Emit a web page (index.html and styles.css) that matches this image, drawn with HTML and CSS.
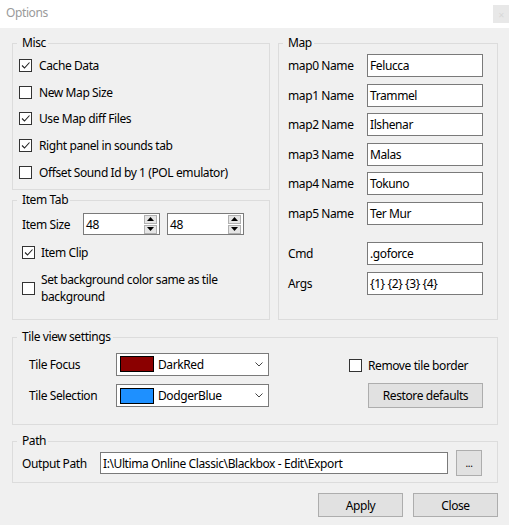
FILE: index.html
```html
<!DOCTYPE html>
<html>
<head>
<meta charset="utf-8">
<link rel="stylesheet" href="styles.css">
</head>
<body>
<div class="titlebar">
  <span class="title">Options</span>
  <span class="close">✕</span>
</div>
<div class="content">
  <div class="top">
    <div class="leftcol">
      <div class="grp misc">
        <div class="legend">Misc</div>
        <div class="checks">
          <div class="check"><span class="cb"><svg viewBox="0 0 11 11" width="11" height="11"><path d="M2 5.5 L4.5 8 L9.5 2.5" fill="none" stroke="#222" stroke-width="1.1"/></svg></span><span>Cache Data</span></div>
          <div class="check"><span class="cb"></span><span>New Map Size</span></div>
          <div class="check"><span class="cb"><svg viewBox="0 0 11 11" width="11" height="11"><path d="M2 5.5 L4.5 8 L9.5 2.5" fill="none" stroke="#222" stroke-width="1.1"/></svg></span><span>Use Map diff Files</span></div>
          <div class="check"><span class="cb"><svg viewBox="0 0 11 11" width="11" height="11"><path d="M2 5.5 L4.5 8 L9.5 2.5" fill="none" stroke="#222" stroke-width="1.1"/></svg></span><span>Right panel in sounds tab</span></div>
          <div class="check"><span class="cb"></span><span>Offset Sound Id by 1 (POL emulator)</span></div>
        </div>
      </div>
      <div class="grp itemtab">
        <div class="legend">Item Tab</div>
        <div class="sizerow">
          <span class="sizelabel">Item Size</span>
          <div class="spin"><span class="spinval">48</span><span class="spinbtns"><span class="sbtn"><svg viewBox="0 0 7 4" width="7" height="4"><path d="M0 4 L3.5 0 L7 4 Z" fill="#000"/></svg></span><span class="sbtn"><svg viewBox="0 0 7 4" width="7" height="4"><path d="M0 0 L3.5 4 L7 0 Z" fill="#000"/></svg></span></span></div>
          <div class="spin"><span class="spinval">48</span><span class="spinbtns"><span class="sbtn"><svg viewBox="0 0 7 4" width="7" height="4"><path d="M0 4 L3.5 0 L7 4 Z" fill="#000"/></svg></span><span class="sbtn"><svg viewBox="0 0 7 4" width="7" height="4"><path d="M0 0 L3.5 4 L7 0 Z" fill="#000"/></svg></span></span></div>
        </div>
        <div class="check clip"><span class="cb"><svg viewBox="0 0 11 11" width="11" height="11"><path d="M2 5.5 L4.5 8 L9.5 2.5" fill="none" stroke="#222" stroke-width="1.1"/></svg></span><span>Item Clip</span></div>
        <div class="check bgrow"><span class="cb"></span><span class="twoline">Set background color same as tile<br>background</span></div>
      </div>
    </div>
    <div class="grp map">
      <div class="legend">Map</div>
      <div class="maprows">
        <div class="frow"><span class="flabel">map0 Name</span><span class="tb">Felucca</span></div>
        <div class="frow"><span class="flabel">map1 Name</span><span class="tb">Trammel</span></div>
        <div class="frow"><span class="flabel">map2 Name</span><span class="tb">Ilshenar</span></div>
        <div class="frow"><span class="flabel">map3 Name</span><span class="tb">Malas</span></div>
        <div class="frow"><span class="flabel">map4 Name</span><span class="tb">Tokuno</span></div>
        <div class="frow"><span class="flabel">map5 Name</span><span class="tb">Ter Mur</span></div>
      </div>
      <div class="cmdrows">
        <div class="frow"><span class="flabel">Cmd</span><span class="tb">.goforce</span></div>
        <div class="frow"><span class="flabel">Args</span><span class="tb">{1} {2} {3} {4}</span></div>
      </div>
    </div>
  </div>

  <div class="grp tileview">
    <div class="legend">Tile view settings</div>
    <div class="tilebody">
      <div class="tilegrid">
        <span class="tlabel">Tile Focus</span>
        <div class="combo"><span class="swatch red"></span><span class="ctext">DarkRed</span><svg class="chev" viewBox="0 0 8 5" width="8" height="5"><path d="M0.5 0.5 L4 4 L7.5 0.5" fill="none" stroke="#444" stroke-width="1"/></svg></div>
        <span class="tlabel">Tile Selection</span>
        <div class="combo"><span class="swatch blue"></span><span class="ctext">DodgerBlue</span><svg class="chev" viewBox="0 0 8 5" width="8" height="5"><path d="M0.5 0.5 L4 4 L7.5 0.5" fill="none" stroke="#444" stroke-width="1"/></svg></div>
      </div>
      <div class="tileright">
        <div class="check rtb"><span class="cb"></span><span>Remove tile border</span></div>
        <button class="btn restore">Restore defaults</button>
      </div>
    </div>
  </div>

  <div class="grp path">
    <div class="legend">Path</div>
    <div class="pathrow">
      <span class="plabel">Output Path</span>
      <span class="tb ptb">I:\Ultima Online Classic\Blackbox - Edit\Export</span>
      <button class="btn dots">...</button>
    </div>
  </div>

  <div class="actions">
    <button class="btn act">Apply</button>
    <button class="btn act">Close</button>
  </div>
</div>
</body>
</html>
```

FILE: styles.css
```css
* { box-sizing: border-box; }

html, body {
  margin: 0;
  padding: 0;
}

body {
  width: 509px;
  height: 525px;
  overflow: hidden;
  background: #f0f0f0;
  font-family: "Noto Sans", "Open Sans", sans-serif;
  font-size: 12px;
  letter-spacing: -0.4px;
  color: #000;
}

.titlebar {
  height: 28px;
  background: #fff;
  display: flex;
  justify-content: space-between;
  align-items: flex-start;
}

.title {
  color: #9a9a9a;
  padding: 5px 0 0 6px;
  line-height: 16px;
}

.close {
  width: 16px;
  height: 18px;
  margin-top: 5px;
  background: #e8e8e8;
  color: #d8d8d8;
  font-size: 8px;
  display: flex;
  align-items: center;
  justify-content: center;
}

.content {
  padding: 15px 11px 0 12px;
}

.top {
  display: grid;
  grid-template-columns: 258px 220px;
  column-gap: 8px;
}

.leftcol {
  display: flex;
  flex-direction: column;
  gap: 10px;
}

.grp {
  border: 1px solid #dcdcdc;
}

.legend {
  display: block;
  width: max-content;
  margin: -9px 0 0 4px;
  padding: 0 2px 0 5px;
  background: #f0f0f0;
  line-height: 16px;
  height: 16px;
}

.itemtab .legend,
.map .legend,
.path .legend {
  margin-left: -5px;
}

.tileview .legend {
  margin-left: -12px;
}

/* Misc */
.misc { height: 147px; }

.checks {
  padding: 1px 0 0 6px;
}

.check {
  display: flex;
  align-items: center;
  gap: 7px;
}

.checks .check {
  height: 26.75px;
}

.cb {
  width: 13px;
  height: 13px;
  flex: none;
  border: 1px solid #333;
  background: #fff;
  display: flex;
  align-items: center;
  justify-content: center;
}

.cb svg { display: block; }

/* Item Tab */
.itemtab {
  height: 120px;
  padding-left: 9px;
}

.sizerow {
  display: flex;
  align-items: center;
  margin-top: 5px;
  height: 22px;
}

.sizelabel {
  width: 61px;
}

.spin {
  width: 77px;
  height: 22px;
  border: 1px solid #7a7a7a;
  background: #fff;
  display: flex;
  align-items: center;
  justify-content: space-between;
  margin-right: 7px;
  padding-left: 2px;
}

.spinbtns {
  display: flex;
  flex-direction: column;
  gap: 1px;
  margin-right: 2px;
}

.sbtn {
  width: 13px;
  height: 9px;
  background: #e5e5e5;
  border: 1px solid #b0b0b0;
  display: flex;
  align-items: center;
  justify-content: center;
}

.sbtn svg { display: block; }

.check.clip {
  height: 20px;
  margin-top: 7px;
  gap: 6px;
}

.check.bgrow {
  margin-top: 10px;
  gap: 6px;
}

.twoline {
  line-height: 16.5px;
}

/* Map */
.map {
  height: 277px;
  padding-left: 9px;
}

.maprows {
  display: flex;
  flex-direction: column;
  gap: 6.6px;
  margin-top: 3px;
}

.cmdrows {
  display: flex;
  flex-direction: column;
  gap: 7px;
  margin-top: 17px;
}

.frow {
  display: flex;
  align-items: center;
}

.flabel {
  width: 79px;
}

.tb {
  display: flex;
  align-items: center;
  width: 116px;
  height: 23px;
  border: 1px solid #7a7a7a;
  background: #fff;
  padding-left: 2px;
  white-space: nowrap;
  overflow: hidden;
}

/* Tile view */
.tileview {
  height: 88px;
  margin-top: 17px;
  padding-left: 16px;
  padding-right: 14px;
}

.tilebody {
  display: flex;
  justify-content: space-between;
  margin-top: 7px;
}

.tilegrid {
  display: grid;
  grid-template-columns: 87px 153px;
  row-gap: 7px;
  align-items: center;
}

.combo {
  height: 23px;
  border: 1px solid #7a7a7a;
  background: #fff;
  display: flex;
  align-items: center;
  padding-left: 3px;
}

.swatch {
  width: 34px;
  height: 16px;
  border: 1px solid #000;
  flex: none;
}

.swatch.red { background: #8b0000; }
.swatch.blue { background: #1e90ff; }

.ctext {
  margin-left: 4px;
  flex: 1;
}

.chev {
  display: block;
  margin-right: 5px;
}

.tileright {
  width: 134px;
  display: flex;
  flex-direction: column;
  align-items: flex-end;
  padding-top: 3px;
}

.check.rtb {
  align-self: flex-start;
  height: 20px;
  gap: 6px;
}

.btn {
  font-family: inherit;
  font-size: 12px;
  letter-spacing: inherit;
  color: #000;
  background: #e1e1e1;
  border: 1px solid #adadad;
  padding: 0;
  margin: 0;
}

.restore {
  width: 115px;
  height: 25px;
  margin-top: 8px;
}

/* Path */
.path {
  height: 42px;
  margin-top: 16px;
  padding-left: 9px;
}

.pathrow {
  display: flex;
  align-items: center;
  height: 26px;
  margin-top: 1px;
}

.plabel {
  width: 78px;
}

.tb.ptb {
  width: 348px;
  height: 22px;
}

.dots {
  width: 26px;
  height: 26px;
  margin-left: 8px;
  font-size: 10px;
}

/* Actions */
.actions {
  display: flex;
  justify-content: flex-end;
  gap: 10px;
  margin-top: 10px;
}

.act {
  width: 85px;
  height: 24px;
}
```
